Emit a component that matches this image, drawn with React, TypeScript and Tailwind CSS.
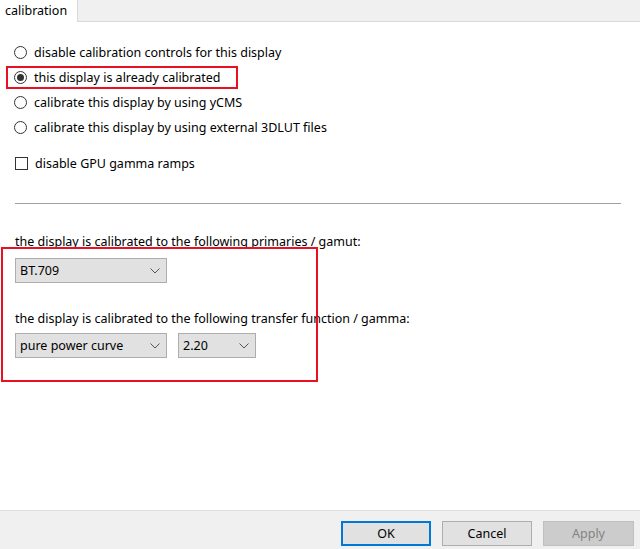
import React from "react"

const font = { fontFamily: '"Segoe UI", "Noto Sans", "Liberation Sans", Arial, sans-serif' }

function Chevron() {
  return (
    <svg width="10" height="6" viewBox="0 0 10 6" className="shrink-0">
      <path d="M0.5 0.5 L5 5 L9.5 0.5" fill="none" stroke="#555" strokeWidth="1" />
    </svg>
  )
}

function Radio({ checked, label }: { checked?: boolean; label: string }) {
  return (
    <div className="flex h-[25px] items-center pl-[14px]">
      <span className="flex h-[13px] w-[13px] shrink-0 items-center justify-center rounded-full border border-[#333] bg-white">
        {checked && <span className="h-[7px] w-[7px] rounded-full bg-[#333]" />}
      </span>
      <span className="ml-[7px] pt-[2px] text-[12.5px] text-black">{label}</span>
    </div>
  )
}

function Select({ value, width }: { value: string; width: string }) {
  return (
    <div className={`flex h-[25px] items-center justify-between border border-[#adadad] bg-[#e1e1e1] pl-[4px] pr-[6px] ${width}`}>
      <span className="pt-[2px] text-[12.5px] text-black">{value}</span>
      <Chevron />
    </div>
  )
}

export default function App() {
  return (
    <div className="relative flex h-[549px] w-[640px] flex-col overflow-hidden bg-white" style={font}>
      {/* tab strip */}
      <div className="flex h-[22px] shrink-0">
        <div className="flex w-[77px] items-center pl-[5px] text-[12.5px] text-black">calibration</div>
        <div className="flex-1 border-b border-l border-[#d9d9d9] bg-[#f0f0f0]" />
      </div>

      <div className="mt-[18px]">
        <Radio label="disable calibration controls for this display" />
        <Radio checked label="this display is already calibrated" />
        <Radio label="calibrate this display by using yCMS" />
        <Radio label="calibrate this display by using external 3DLUT files" />
      </div>

      <div className="mt-[10px] flex h-[26px] items-center pl-[15px]">
        <span className="h-[13px] w-[13px] shrink-0 border border-[#333] bg-white" />
        <span className="ml-[7px] pt-[2px] text-[12.5px] text-black">disable GPU gamma ramps</span>
      </div>

      <div className="ml-[15px] mt-[27px] h-px w-[606px] bg-[#a0a0a0]" />

      <div className="mt-[28px] flex h-[18px] items-center pl-[15px] pt-[2px] text-[12.5px] text-black">
        the display is calibrated to the following primaries / gamut:
      </div>
      <div className="mt-[8px] pl-[15px]">
        <Select value="BT.709" width="w-[152px]" />
      </div>

      <div className="mt-[26px] flex h-[18px] items-center pl-[15px] pt-[2px] text-[12.5px] text-black">
        the display is calibrated to the following transfer function / gamma:
      </div>
      <div className="mt-[6px] flex gap-[11px] pl-[15px]">
        <Select value="pure power curve" width="w-[152px]" />
        <Select value="2.20" width="w-[78px]" />
      </div>

      <div className="flex-1" />

      {/* button bar */}
      <div className="flex h-[39px] shrink-0 items-start justify-end gap-[11px] border-t border-[#dfdfdf] bg-[#f0f0f0] pr-[6px] pt-[10px]">
        <button className="flex h-[25px] w-[90px] items-center justify-center border-2 border-[#0078d7] bg-[#e1e1e1] pt-[1px] text-[12.5px] text-black">
          OK
        </button>
        <button className="flex h-[25px] w-[90px] items-center justify-center border border-[#adadad] bg-[#e1e1e1] pt-[1px] text-[12.5px] text-black">
          Cancel
        </button>
        <button className="flex h-[25px] w-[91px] items-center justify-center border border-[#bfbfbf] bg-[#cccccc] pt-[1px] text-[12.5px] text-[#838383]">
          Apply
        </button>
      </div>

      {/* annotation boxes */}
      <div className="pointer-events-none absolute left-[6px] top-[66px] h-[23px] w-[232px] border-2 border-[#e81123]" />
      <div className="pointer-events-none absolute left-[1px] top-[247px] h-[135px] w-[317px] border-2 border-[#e81123]" />
    </div>
  )
}
